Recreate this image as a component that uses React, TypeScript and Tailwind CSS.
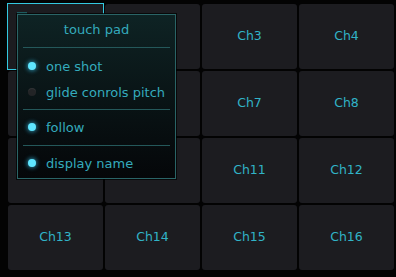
import React from "react";

const font = { fontFamily: '"DejaVu Sans", "Verdana", sans-serif' };

function Dot({ on }: { on: boolean }) {
  return on ? (
    <span className="w-[8px] h-[8px] shrink-0 rounded-full bg-[#5fe6ff] shadow-[0_0_4px_1px_rgba(60,210,255,0.6)]" />
  ) : (
    <span className="w-[8px] h-[8px] shrink-0 rounded-full bg-[#222426] shadow-[inset_0_1px_1px_rgba(255,255,255,0.08)]" />
  );
}

function Item({ on, label }: { on: boolean; label: string }) {
  return (
    <div className="h-[26px] flex items-center pl-[10px] gap-[10px]">
      <Dot on={on} />
      <span className="text-[13px] text-[#34abbd] leading-none whitespace-nowrap">{label}</span>
    </div>
  );
}

function Sep() {
  return <div className="h-px mx-[5px] bg-[#24585a]" />;
}

export default function App() {
  const cells = Array.from({ length: 16 }, (_, i) => `Ch${i + 1}`);
  return (
    <div className="w-[396px] h-[277px] bg-[#030303] relative overflow-hidden" style={font}>
      <div className="grid grid-cols-[repeat(4,95px)] grid-rows-[repeat(4,65px)] gap-[2px] pl-[8px] pt-[4px]">
        {cells.map((c, i) => (
          <div
            key={c}
            className={`relative bg-[#1c1c20] flex items-center justify-center text-[12.5px] text-[#31b3c7] ${
              i === 0 ? "" : "rounded-[3px]"
            }`}
          >
            {i === 0 && <div className="absolute -inset-px border border-[#33c9e0]" />}
            {c}
          </div>
        ))}
      </div>

      <div className="absolute left-[17px] top-[12px] w-[10px] h-[2px] bg-[#1d5b5f]" />

      <div className="absolute left-[17px] top-[14px] w-[159px] h-[165px] border border-[#2a6466] bg-gradient-to-b from-[#0e2324] to-[#050709] shadow-[0_0_0_1px_rgba(0,0,0,0.7)] flex flex-col">
        <div className="h-[32px] flex items-center justify-center text-[13px] text-[#34abbd] pb-[2px] whitespace-nowrap">
          touch pad
        </div>
        <Sep />
        <div className="pt-[5px] pb-[4px]">
          <Item on label="one shot" />
          <Item on={false} label="glide conrols pitch" />
        </div>
        <Sep />
        <div className="pt-[4px] pb-[5px]">
          <Item on label="follow" />
        </div>
        <Sep />
        <div className="pt-[4px]">
          <Item on label="display name" />
        </div>
      </div>
    </div>
  );
}
